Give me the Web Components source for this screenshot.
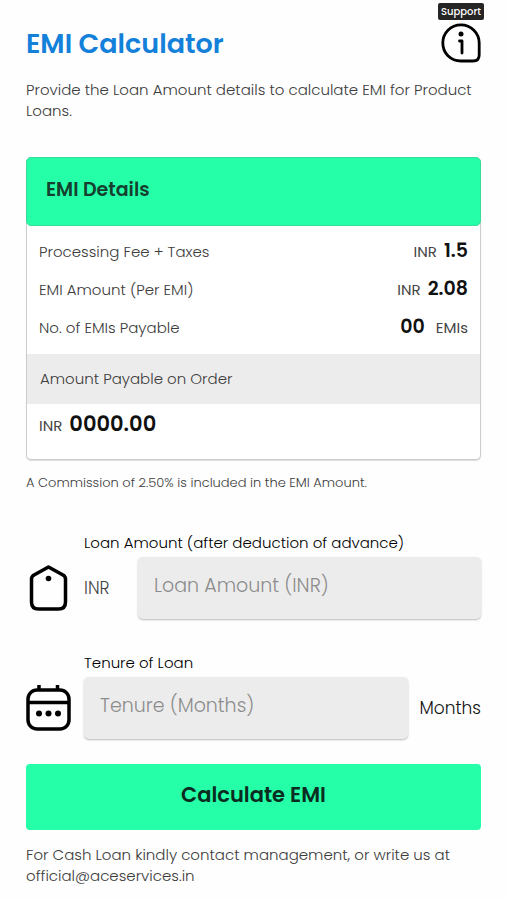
<!DOCTYPE html>
<html lang="en">
<head>
<meta charset="utf-8">
<meta name="viewport" content="width=device-width, initial-scale=1">
<title>EMI Calculator</title>
<style>
  body { margin: 0; background: #fefefe; color: #3c3c3c; font-family: Poppins, Inter, "Open Sans", sans-serif; font-size: 15px; line-height: 21px; font-weight: 300; }
</style>
</head>
<body>
<emi-app></emi-app>
<script>
const define = (name, html, setup) => {
  const template = document.createElement('template');
  template.innerHTML = html;
  customElements.define(name, class extends HTMLElement {
    constructor() {
      super();
      this.attachShadow({ mode: 'open' }).append(template.content.cloneNode(true));
    }
    connectedCallback() { if (setup) setup(this, this.shadowRoot); }
  });
};

define('support-button', `
  <style>
    :host { display: block; }
    button { display: flex; flex-direction: column; align-items: center; gap: 3px; border: 0; padding: 0; background: none; font: inherit; cursor: pointer; }
    span { background: #252525; color: #fff; border-radius: 2px; padding: 0 3px; font-size: 10px; line-height: 17px; font-weight: 500; }
    svg { display: block; width: 40px; height: 40px; }
  </style>
  <button type="button">
    <span>Support</span>
    <svg viewBox="0 0 40 40" fill="none" stroke="#000" stroke-width="2.800" stroke-linecap="round" aria-hidden="true">
      <path d="M20 1.800C30 1.800 38.200 10 38.200 20V32Q38.200 38 32 38H20C9.500 38 1.800 30 1.800 20S9.500 1.800 20 1.800Z"/>
      <path d="M18.500 18H21V30" stroke-linejoin="round"/>
      <circle cx="20" cy="11" r="2.500" fill="#000" stroke="none"/>
    </svg>
  </button>`);

define('page-header', `
  <style>
    :host { display: flex; justify-content: space-between; align-items: flex-start; margin-right: -3px; }
    h1 { margin: 23px 0 0; color: #1380da; font-size: 27px; line-height: 36px; font-weight: 600; }
  </style>
  <h1><slot></slot></h1><slot name="action"></slot>`);

define('summary-row', `
  <style>
    :host { display: flex; justify-content: space-between; align-items: baseline; line-height: 37px; }
    .value { display: flex; align-items: baseline; gap: var(--value-gap, 7px); color: #444; font-weight: 400; }
    ::slotted(b) { color: #111; font-size: 19px; font-weight: 600; }
  </style>
  <span><slot name="label"></slot></span><span class="value"><slot></slot></span>`);

define('emi-summary', `
  <style>
    :host { display: block; border: 1px solid #ccc; border-radius: 5px; box-shadow: 0 1px 1px #ddd; background: #fff; }
    h2 { margin: -1px -1px 0; padding: 17px 19px 20px; border: 1px solid #38dd9c; border-radius: 5px; background: #24ffa8; color: #15402f; font-size: 19px; line-height: 30px; font-weight: 600; }
    .rows { padding: 6px 12px 8px; }
    .band { background: #ececec; padding: 0 13px; line-height: 50px; }
    .total { display: flex; align-items: baseline; gap: 7px; padding: 0 12px 13px; line-height: 40px; color: #444; font-weight: 400; }
    ::slotted(b) { color: #111; font-size: 21px; font-weight: 600; }
  </style>
  <h2>EMI Details</h2>
  <div class="rows"><slot></slot></div>
  <div class="band">Amount Payable on Order</div>
  <div class="total"><span>INR</span><slot name="total"></slot></div>`);

define('emi-field', `
  <style>
    :host { display: grid; grid-template-columns: 45px minmax(0, 1fr); column-gap: 13px; row-gap: 4px; align-items: center; }
    label { grid-column: 2; color: #000; line-height: 21px; }
    .line { display: flex; align-items: center; gap: 12px; }
    ::slotted([slot=before]) { width: 42px; font-size: 17px; color: #444; }
    ::slotted([slot=after]) { font-size: 17px; color: #111; }
    input { flex: 1; min-width: 0; box-sizing: border-box; height: 62px; padding: 0 16px 6px; border: 0; border-radius: 5px; background: #ececec; box-shadow: 0 1px 2px #bbb; color: #333; font: inherit; font-size: 19px; }
    input::placeholder { color: #8c8c8c; opacity: 1; }
  </style>
  <label for="field"></label>
  <slot name="icon"></slot>
  <div class="line"><slot name="before"></slot><input id="field" type="text" inputmode="numeric"><slot name="after"></slot></div>`,
  (host, root) => {
    root.querySelector('label').textContent = host.getAttribute('label');
    root.querySelector('input').placeholder = host.getAttribute('placeholder');
  });

define('tag-icon', `
  <style>:host, svg { display: block; width: 45px; height: 46px; }</style>
  <svg viewBox="0 0 45 46" fill="none" stroke="#000" stroke-width="3.500" stroke-linejoin="round" aria-hidden="true">
    <path d="M22.500 2L37 10Q39.500 11.500 39.500 14V37Q39.500 44 32.500 44H12.500Q5.500 44 5.500 37V14Q5.500 11.500 8 10Z"/>
    <circle cx="22.500" cy="13.500" r="2.800" fill="#000" stroke="none"/>
  </svg>`);

define('calendar-icon', `
  <style>:host, svg { display: block; width: 45px; height: 46px; }</style>
  <svg viewBox="0 0 45 46" fill="none" stroke="#000" stroke-width="3.500" aria-hidden="true">
    <rect x="2" y="5" width="41" height="39" rx="9"/>
    <path d="M2 17.500H43M13 6V0M31.500 6V0"/>
    <g fill="#000" stroke="none"><circle cx="13" cy="28.500" r="3"/><circle cx="22.500" cy="28.500" r="3"/><circle cx="32" cy="28.500" r="3"/></g>
  </svg>`);

define('primary-button', `
  <style>
    :host { display: block; }
    button { display: block; width: 100%; border: 0; border-radius: 4px; padding: 16px 16px 20px; background: #24ffa8; color: #0b2c20; font: inherit; font-size: 21px; line-height: 30px; font-weight: 600; cursor: pointer; }
  </style>
  <button type="button"><slot></slot></button>`);

define('emi-app', `
  <style>
    :host { display: block; }
    main { padding: 3px 25px 12px 26px; }
    p { margin: 0; }
    .intro { margin: 16px 0 36px; }
    .note { margin: 12px 0 39px; font-size: 13px; }
    .count { --value-gap: 11px; }
    emi-field + emi-field { margin-top: 33px; }
    primary-button { margin: 25px 0 14px; }
    a { color: inherit; text-decoration: none; }
  </style>
  <main>
    <page-header>EMI Calculator<support-button slot="action"></support-button></page-header>
    <p class="intro">Provide the Loan Amount details to calculate EMI for Product Loans.</p>
    <emi-summary>
      <summary-row><span slot="label">Processing Fee + Taxes</span><span>INR</span><b>1.5</b></summary-row>
      <summary-row><span slot="label">EMI Amount (Per EMI)</span><span>INR</span><b>2.08</b></summary-row>
      <summary-row class="count"><span slot="label">No. of EMIs Payable</span><b>00</b><span>EMIs</span></summary-row>
      <b slot="total">0000.00</b>
    </emi-summary>
    <p class="note">A Commission of 2.50% is included in the EMI Amount.</p>
    <emi-field label="Loan Amount (after deduction of advance)" placeholder="Loan Amount (INR)">
      <tag-icon slot="icon"></tag-icon><span slot="before">INR</span>
    </emi-field>
    <emi-field label="Tenure of Loan" placeholder="Tenure (Months)">
      <calendar-icon slot="icon"></calendar-icon><span slot="after">Months</span>
    </emi-field>
    <primary-button>Calculate EMI</primary-button>
    <p>For Cash Loan kindly contact management, or write us at <a href="mailto:official@aceservices.in">official@aceservices.in</a></p>
  </main>`);
</script>
</body>
</html>
